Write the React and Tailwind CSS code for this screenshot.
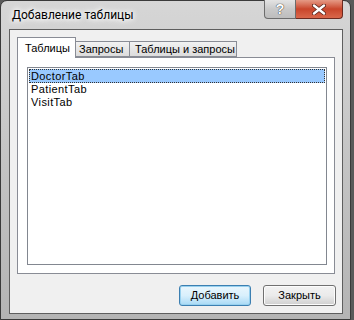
export default function App() {
  const sans = { fontFamily: '"Liberation Sans", Arial, sans-serif' };
  return (
    <div className="w-[354px] h-[320px] bg-[#5a5a5a] flex">
      <div className="w-[351px] h-[320px] rounded-tr-[7px] rounded-tl-[7px] border border-[#3a3a3a] bg-gradient-to-b from-[#d6d6d6] via-[#c4c4c4] to-[#b4b4b4] flex flex-col relative">
        {/* title bar */}
        <div className="h-[28px] flex items-start shrink-0">
          <div
            className="pl-[11px] pt-[6px] text-[12px] text-black leading-[16px]"
            style={{ fontFamily: 'Roboto, "Open Sans", sans-serif', textShadow: '0 0 8px #fff, 0 0 6px #fff, 0 0 4px #fff' }}
          >
            Добавление таблицы
          </div>
          <div className="ml-auto mr-[7px] flex h-[19px] -mt-px">
            <div className="w-[32px] h-[19px] rounded-bl-[4px] border border-[#6c6c6c] border-t-0 bg-gradient-to-b from-[#e4e4e4] via-[#c9c9c9] to-[#bdbdbd] flex items-center justify-center">
              <span className="text-[14px] font-bold text-white leading-none" style={{ ...sans, textShadow: '0 0 1px #333, 0 0 1px #333' }}>?</span>
            </div>
            <div className="w-[47px] h-[19px] rounded-br-[4px] border border-l-0 border-[#6c2a20] border-t-0 bg-gradient-to-b from-[#e59a86] via-[#c9452b] to-[#d9674b] flex items-center justify-center">
              <svg width="14" height="11" viewBox="0 0 14 11">
                <path d="M2 1.5 L12 9.5 M12 1.5 L2 9.5" stroke="#5a2218" strokeWidth="4" strokeLinecap="round" />
                <path d="M2 1.5 L12 9.5 M12 1.5 L2 9.5" stroke="#ffffff" strokeWidth="2.4" strokeLinecap="round" />
              </svg>
            </div>
          </div>
        </div>
        {/* client */}
        <div className="ml-[8px] mr-[7px] h-[285px] border border-[#5e5e5e] bg-[#f0f0f0] flex flex-col px-[7px] pt-[7px] pb-[6px]" style={sans}>
          {/* tabs */}
          <div className="flex items-end h-[20px] relative z-10">
            <div className="h-[21px] w-[59px] border border-b-0 border-[#898c95] bg-[#ffffff] pl-[7px] pt-[5px] text-[11px] text-black leading-none -mb-px">
              Таблицы
            </div>
            <div className="h-[16px] w-[54px] border border-l-0 border-[#898c95] bg-gradient-to-b from-[#f2f2f2] to-[#dcdcdc] pl-[3px] pt-[1px] text-[11px] text-black leading-[13px]">
              Запросы
            </div>
            <div className="h-[16px] w-[107px] border border-l-0 border-[#898c95] bg-gradient-to-b from-[#f2f2f2] to-[#dcdcdc] pl-[5px] pt-[1px] text-[11px] text-black leading-[13px]">
              Таблицы и запросы
            </div>
          </div>
          <div className="h-[217px] border border-[#898c95] bg-white pl-[9px] pr-[7px] pt-[9px] pb-[8px] flex">
            <div className="flex-1 border border-[#828790] bg-white flex flex-col p-px text-[11px] text-black tracking-[0.4px]">
              <div className="h-[14px] bg-[#99c9ff] border border-dotted border-[#333] pl-[1px] leading-[12px]">DoctorTab</div>
              <div className="h-[13px] pl-[2px] leading-[13px]">PatientTab</div>
              <div className="h-[13px] pl-[2px] leading-[13px]">VisitTab</div>
            </div>
          </div>
          <div className="flex justify-end gap-[12px] mt-[11px] mr-[-1px]">
            <button className="w-[72px] h-[21px] rounded-[3px] border border-[#3c7fb1] bg-gradient-to-b from-[#eaf6fd] via-[#d9f0fc] to-[#a7d9f5] text-[11px] text-black shadow-[inset_0_0_0_1px_#98d1ef]">
              Добавить
            </button>
            <button className="w-[73px] h-[21px] rounded-[3px] border border-[#707070] bg-gradient-to-b from-[#f2f2f2] via-[#ebebeb] to-[#cfcfcf] text-[11px] text-black shadow-[inset_0_0_0_1px_#fcfcfc]">
              Закрыть
            </button>
          </div>
        </div>
      </div>
    </div>
  );
}
